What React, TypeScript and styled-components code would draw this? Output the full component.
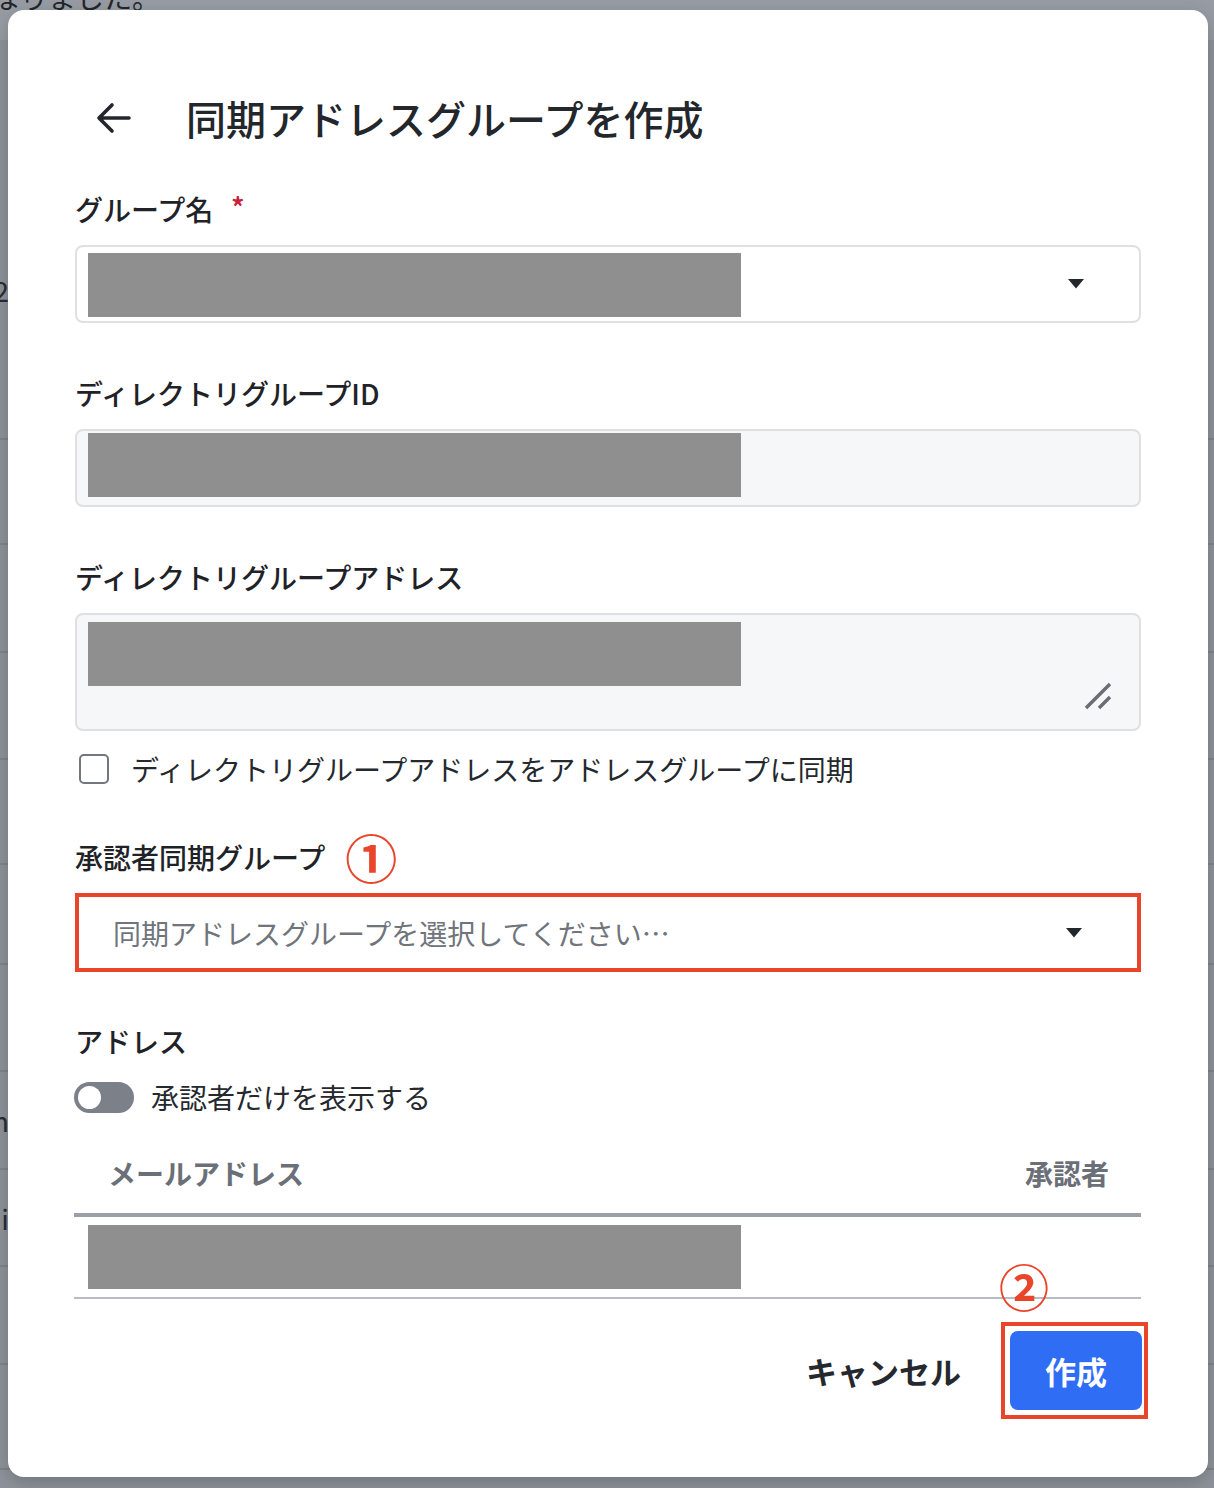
import styled, { createGlobalStyle } from 'styled-components';

const GlobalStyle = createGlobalStyle`
  html, body {
    margin: 0;
    padding: 0;
  }
  body {
    width: 1214px;
    height: 1488px;
    overflow: hidden;
    background: #8e939b;
    font-family: "Noto Sans CJK JP", "Noto Sans", sans-serif;
    color: #1f2328;
  }
`;

// ---- page behind the overlay ----

const Backdrop = styled.div`
  position: relative;
  width: 1214px;
  height: 1488px;
  overflow: hidden;
  background: #8e939b;
`;

const Notice = styled.div`
  height: 40px;
  background: #979ca4;
  overflow: hidden;
  font-size: 28px;
  line-height: 28px;
  color: #23262b;
  white-space: nowrap;

  span {
    display: inline-block;
    transform: translate(-8px, -17px);
  }
`;

const BgTop = styled.div`
  height: 400px;
  padding-top: 230px;
  box-sizing: border-box;
  display: flex;
  align-items: flex-start;
  line-height: 40px;
  border-bottom: 2px solid #7f848c;
`;

const BgRow = styled.div<{ $h: number }>`
  height: ${(p) => p.$h}px;
  box-sizing: border-box;
  border-bottom: 2px solid #7f848c;
  display: flex;
  align-items: center;
`;

const BgCell = styled.div`
  width: 9px;
  overflow: hidden;
  display: flex;
  justify-content: flex-end;
  font-size: 28px;
  color: #2a2d32;
  white-space: nowrap;
`;

// ---- dialog ----

const Dialog = styled.div`
  position: absolute;
  left: 8px;
  top: 10px;
  width: 1200px;
  height: 1467px;
  box-sizing: border-box;
  background: #fff;
  border-radius: 16px;
  box-shadow: 0 6px 18px rgba(0, 0, 0, 0.2);
  padding: 68px 67px 0 67px;
  display: flex;
  flex-direction: column;
`;

const Header = styled.div`
  height: 80px;
  display: flex;
  align-items: center;
`;

const BackButton = styled.button`
  border: 0;
  background: none;
  padding: 0;
  margin-left: 21px;
  margin-right: 54px;
  display: flex;
  color: #23272c;
`;

const Title = styled.h1`
  margin: 0;
  font-size: 40px;
  font-weight: 500;
  color: #23272c;
  line-height: 56px;
`;

const Label = styled.div<{ $mt: number }>`
  margin-top: ${(p) => p.$mt}px;
  height: 40px;
  display: flex;
  align-items: center;
  font-size: 28px;
  font-weight: 500;
  color: #1f2328;
`;

const Required = styled.span`
  color: #c8233c;
  font-size: 26px;
  font-weight: 700;
  margin-left: 18px;
  margin-top: -8px;
`;

const Marker = styled.span<{ $size: number }>`
  color: #e9452a;
  font-size: ${(p) => p.$size}px;
  font-weight: 700;
  line-height: 1;
`;

const LabelMarker = styled(Marker)`
  margin-left: 20px;
`;

const Box = styled.div<{ $variant: 'select' | 'readonly' | 'highlight'; $h: number }>`
  position: relative;
  margin-top: 16px;
  height: ${(p) => p.$h}px;
  box-sizing: border-box;
  display: flex;
  align-items: ${(p) => (p.$variant === 'highlight' ? 'center' : 'flex-start')};
  border-radius: ${(p) => (p.$variant === 'highlight' ? '0' : '8px')};
  border: ${(p) =>
    p.$variant === 'highlight' ? '4px solid #e9452a' : '2px solid #dfe0e3'};
  background: ${(p) => (p.$variant === 'readonly' ? '#f6f7f9' : '#fff')};
`;

const Redacted = styled.div<{ $top: number }>`
  width: 653px;
  height: 64px;
  margin-left: 11px;
  margin-top: ${(p) => p.$top}px;
  background: #8f8f8f;
`;

const Caret = styled.svg`
  position: absolute;
  right: 55px;
  top: 50%;
  margin-top: -5px;
`;

const Grip = styled.svg`
  position: absolute;
  right: 27px;
  bottom: 19px;
`;

const Placeholder = styled.span`
  margin-left: 34px;
  font-size: 28px;
  color: #70747b;
`;

const CheckRow = styled.label`
  margin-top: 18px;
  height: 40px;
  display: flex;
  align-items: center;
  font-size: 28px;
  color: #25292e;
`;

const CheckBox = styled.span`
  width: 30px;
  height: 30px;
  box-sizing: border-box;
  border: 2px solid #72767d;
  border-radius: 5px;
  margin-left: 4px;
  margin-right: 22px;
`;

const ToggleRow = styled.div`
  margin-top: 16px;
  height: 40px;
  display: flex;
  align-items: center;
  font-size: 28px;
  color: #25292e;
`;

const Track = styled.span`
  width: 60px;
  height: 31px;
  border-radius: 16px;
  background: #7c8089;
  display: flex;
  align-items: center;
  padding-left: 4px;
  box-sizing: border-box;
  margin-left: -1px;
  margin-right: 17px;
`;

const Knob = styled.span`
  width: 23px;
  height: 23px;
  border-radius: 50%;
  background: #fff;
`;

const Table = styled.div`
  margin-top: 8px;
  margin-left: -1px;
  display: flex;
  flex-direction: column;
`;

const HeadRow = styled.div`
  height: 92px;
  box-sizing: border-box;
  padding: 28px 32px 0 34px;
  display: flex;
  justify-content: space-between;
  border-bottom: 4px solid #9b9fa7;
`;

const HeadCell = styled.span`
  font-size: 28px;
  line-height: 40px;
  font-weight: 700;
  color: #6b6f77;
`;

const BodyRow = styled.div`
  height: 82px;
  box-sizing: border-box;
  display: flex;
  align-items: center;
  padding-left: 3px;
  border-bottom: 2px solid #b9bcc2;
`;

const Footer = styled.div`
  margin-top: 23px;
  display: flex;
  justify-content: flex-end;
  align-items: center;
  margin-right: -7px;
`;

const CancelButton = styled.button`
  border: 0;
  background: none;
  padding: 0;
  margin-right: 40px;
  font-family: inherit;
  font-size: 31px;
  font-weight: 700;
  color: #25292e;
`;

const Highlight = styled.div`
  position: relative;
  border: 4px solid #e9452a;
  padding: 5px 2px 5px 5px;
`;

const FloatMarker = styled(Marker)`
  position: absolute;
  left: -6px;
  top: -66px;
`;

const PrimaryButton = styled.button`
  width: 132px;
  height: 79px;
  border: 0;
  border-radius: 8px;
  background: #2f6df5;
  color: #fff;
  font-family: inherit;
  font-size: 31px;
  font-weight: 700;
  display: block;
`;

const CaretIcon = () => (
  <Caret width="16" height="10" viewBox="0 0 16 10">
    <path d="M0 0H16L8 9.5Z" fill="#23272c" />
  </Caret>
);

const bgRows = [105, 108, 107, 105, 100, 107, 98, 97, 98, 105];
const bgText: Record<number, string> = { 6: 'admin', 7: 'ui' };

export default function App() {
  return (
    <>
      <GlobalStyle />
      <Backdrop>
        <Notice>
          <span>なりました。</span>
        </Notice>
        <BgTop>
          <BgCell>12</BgCell>
        </BgTop>
        {bgRows.map((h, i) => (
          <BgRow key={i} $h={h}>
            {bgText[i] && <BgCell>{bgText[i]}</BgCell>}
          </BgRow>
        ))}

        <Dialog>
          <Header>
            <BackButton aria-label="戻る">
              <svg width="36" height="32" viewBox="0 0 36 32" fill="none">
                <path
                  d="M3 16H33M16 3L3 16L16 29"
                  stroke="currentColor"
                  strokeWidth="3.6"
                  strokeLinecap="round"
                  strokeLinejoin="round"
                />
              </svg>
            </BackButton>
            <Title>同期アドレスグループを作成</Title>
          </Header>

          <Label $mt={31}>
            グループ名<Required>*</Required>
          </Label>
          <Box $variant="select" $h={78}>
            <Redacted $top={6} />
            <CaretIcon />
          </Box>

          <Label $mt={50}>ディレクトリグループID</Label>
          <Box $variant="readonly" $h={78}>
            <Redacted $top={2} />
          </Box>

          <Label $mt={50}>ディレクトリグループアドレス</Label>
          <Box $variant="readonly" $h={118}>
            <Redacted $top={7} />
            <Grip width="28" height="28" viewBox="0 0 28 28">
              <path d="M2 26L26 2M15 26L26 15" stroke="#696d74" strokeWidth="3.4" />
            </Grip>
          </Box>

          <CheckRow>
            <CheckBox />
            ディレクトリグループアドレスをアドレスグループに同期
          </CheckRow>

          <Label $mt={48}>
            承認者同期グループ
            <LabelMarker $size={52}>①</LabelMarker>
          </Label>
          <Box $variant="highlight" $h={79}>
            <Placeholder>同期アドレスグループを選択してください…</Placeholder>
            <CaretIcon />
          </Box>

          <Label $mt={49}>アドレス</Label>
          <ToggleRow>
            <Track>
              <Knob />
            </Track>
            承認者だけを表示する
          </ToggleRow>

          <Table>
            <HeadRow>
              <HeadCell>メールアドレス</HeadCell>
              <HeadCell>承認者</HeadCell>
            </HeadRow>
            <BodyRow>
              <Redacted $top={0} />
            </BodyRow>
          </Table>

          <Footer>
            <CancelButton>キャンセル</CancelButton>
            <Highlight>
              <FloatMarker $size={50}>②</FloatMarker>
              <PrimaryButton>作成</PrimaryButton>
            </Highlight>
          </Footer>
        </Dialog>
      </Backdrop>
    </>
  );
}
